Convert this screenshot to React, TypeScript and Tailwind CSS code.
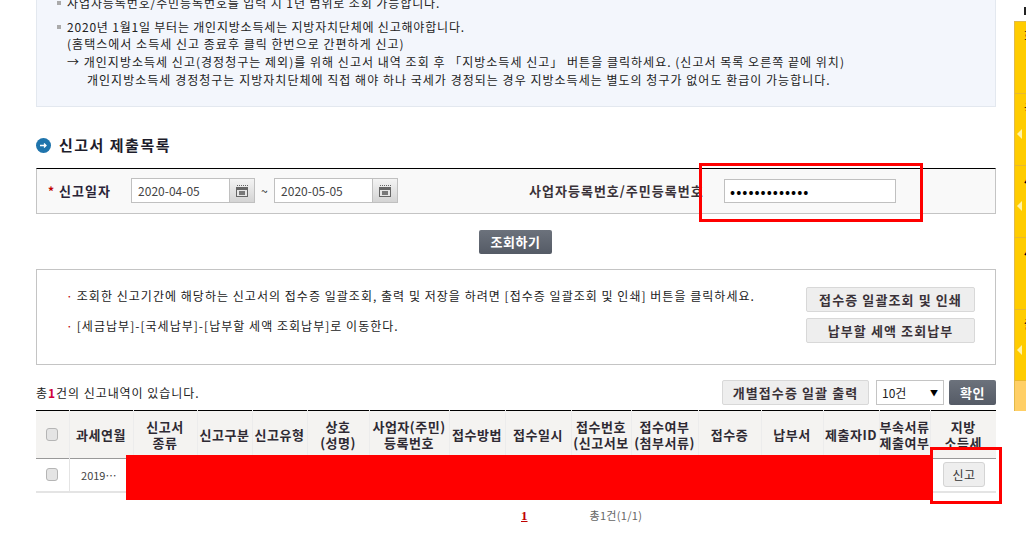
import React from "react";

const KR = "[font-family:'Noto_Sans_CJK_KR','Liberation_Sans',sans-serif]";

const columns = [
  { w: "w-[33px]", label: [""] },
  { w: "w-[64px]", label: ["과세연월"] },
  { w: "w-[64px]", label: ["신고서", "종류"] },
  { w: "w-[55px]", label: ["신고구분"] },
  { w: "w-[55px]", label: ["신고유형"] },
  { w: "w-[62px]", label: ["상호", "(성명)"] },
  { w: "w-[80px]", label: ["사업자(주민)", "등록번호"] },
  { w: "w-[56px]", label: ["접수방법"] },
  { w: "w-[66px]", label: ["접수일시"] },
  { w: "w-[60px]", label: ["접수번호", "(신고서보"] },
  { w: "w-[67px]", label: ["접수여부", "(첨부서류)"] },
  { w: "w-[63px]", label: ["접수증"] },
  { w: "w-[62px]", label: ["납부서"] },
  { w: "w-[56px]", label: ["제출자ID"] },
  { w: "w-[51px]", label: ["부속서류", "제출여부"] },
  { w: "w-[66px]", label: ["지방", "소득세"] },
];

const sideItems = [
  { h: "h-[72px]", text: "회", arrow: false, bold: false },
  { h: "h-[72px]", text: "국", arrow: true, bold: false },
  { h: "h-[72px]", text: "세", arrow: true, bold: true },
  { h: "h-[72px]", text: "세", arrow: false, bold: true },
  { h: "h-[71px]", text: "출", arrow: true, bold: false },
];

function Check() {
  return <span className="block mx-auto w-[12px] h-[13px] rounded-[3px] border border-[#b5b5b5] bg-[#e4e4e4]" />;
}

function CalendarButton() {
  return (
    <button className="flex items-center justify-center w-[25px] h-[25px] border border-l-0 border-[#c0c0c0] bg-gradient-to-b from-[#f4f4f4] to-[#d4d4d4]">
      <svg width="12" height="12" viewBox="0 0 12 12">
        <path d="M1 0.5h1M3 0.5h1M5 0.5h1M7 0.5h1M9 0.5h1M11 0.5h1" stroke="#666" strokeWidth="1" />
        <rect x="0.5" y="2.5" width="11" height="9" fill="#e6e6e6" stroke="#666" />
        <rect x="1" y="3" width="10" height="2" fill="#666" />
        <path d="M3 7h6M3 9h6M4 6v4M6 6v4M8 6v4" stroke="#555" strokeWidth="1" />
      </svg>
    </button>
  );
}

function DateField({ value }: { value: string }) {
  return (
    <div className="flex">
      <input
        readOnly
        value={value}
        className="w-[99px] h-[25px] border border-[#c0c0c0] bg-white pl-[6px] text-[12px] text-[#444] outline-none"
      />
      <CalendarButton />
    </div>
  );
}

function GrayButton({ label, className }: { label: string; className: string }) {
  return (
    <button className={`${className} rounded-[2px] border border-[#d8d8d8] bg-[#eeeeee] text-[13px] font-bold tracking-[1.1px] text-[#3a3238]`}>
      {label}
    </button>
  );
}

export default function App() {
  return (
    <div className={`relative flex h-[539px] w-[1026px] overflow-hidden bg-white text-[12px] text-[#222] ${KR}`}>
      <main className="ml-[36px] w-[960px] shrink-0">
        <div className="-mt-[7px] h-[114px] border border-t-0 border-[#e3e8ef] bg-[#f3f6fc] pl-[20px] pt-[1px] leading-[18px] tracking-[1.02px]">
          <p className="flex items-center gap-[6px] tracking-[0.9px]">
            <span className="h-[4px] w-[4px] bg-[#aaa]" />
            <span>사업자등록번호/주민등록번호를 입력 시 1년 범위로 조회 가능합니다.</span>
          </p>
          <p className="mt-[6px] flex h-[17px] items-center gap-[6px] tracking-[0.8px]">
            <span className="h-[4px] w-[4px] bg-[#aaa]" />
            <span>2020년 1월1일 부터는 개인지방소득세는 지방자치단체에 신고해야합니다.</span>
          </p>
          <p className="pl-[10px]">(홈택스에서 소득세 신고 종료후 클릭 한번으로 간편하게 신고)</p>
          <p className="pl-[10px]">→ 개인지방소득세 신고(경정청구는 제외)를 위해 신고서 내역 조회 후 「지방소득세 신고」 버튼을 클릭하세요. (신고서 목록 오른쪽 끝에 위치)</p>
          <p className="pl-[30px]">개인지방소득세 경정청구는 지방자치단체에 직접 해야 하나 국세가 경정되는 경우 지방소득세는 별도의 청구가 없어도 환급이 가능합니다.</p>
        </div>

        <h2 className="mt-[29px] flex h-[18px] items-center gap-[8px] text-[15px] font-bold tracking-[1.5px] text-[#1d1d2b]">
          <svg width="15" height="15" viewBox="0 0 15 15">
            <circle cx="7.5" cy="7.5" r="7.5" fill="#1f74ac" />
            <path d="M4 7.5h6M8 5.5l2 2-2 2" stroke="#fff" strokeWidth="1.3" fill="none" />
          </svg>
          신고서 제출목록
        </h2>

        <div className="mt-[14px] flex h-[46px] items-center border border-[#c4c4c4] border-t-black bg-[#f9f9f9] pb-[1px] pl-[11px]">
          <span className="text-[12px] font-bold text-[#c00000]">*</span>
          <span className="ml-[5px] w-[72px] text-[13px] font-bold tracking-[1px] text-[#2a2438]">신고일자</span>
          <DateField value="2020-04-05" />
          <span className="mx-[6px] w-[7px] text-[12px]">~</span>
          <DateField value="2020-05-05" />
          <span className="ml-[131px] w-[195px] text-[13px] font-bold tracking-[1px] text-[#3a3238]">사업자등록번호/주민등록번호</span>
          <input
            readOnly
            value="•••••••••••••"
            className="h-[24px] w-[172px] border border-[#c0c0c0] bg-white pl-[5px] text-[15px] tracking-[1px] text-black outline-none"
          />
        </div>

        <div className="mt-[16px] flex justify-center">
          <button className="ml-[-1px] h-[24px] w-[73px] rounded-[2px] bg-gradient-to-b from-[#6c727c] to-[#555b66] text-[13px] font-bold tracking-[0.6px] text-white">
            조회하기
          </button>
        </div>

        <div className="mt-[15px] flex h-[96px] border border-[#c4c4c4] pl-[29px]">
          <div className="flex-1 pt-[17px] tracking-[1.03px]">
            <p className="h-[30px] leading-[18px]"><span className="mr-[3px] text-[#c00000]">·</span>조회한 신고기간에 해당하는 신고서의 접수증 일괄조회, 출력 및 저장을 하려면 [접수증 일괄조회 및 인쇄] 버튼을 클릭하세요.</p>
            <p className="leading-[18px]"><span className="mr-[3px] text-[#c00000]">·</span>[세금납부]-[국세납부]-[납부할 세액 조회납부]로 이동한다.</p>
          </div>
          <div className="mr-[20px] flex flex-col gap-[6px] pt-[17px]">
            <GrayButton label="접수증 일괄조회 및 인쇄" className="h-[25px] w-[169px]" />
            <GrayButton label="납부할 세액 조회납부" className="h-[25px] w-[169px]" />
          </div>
        </div>

        <div className="mt-[15px] flex h-[25px] items-center">
          <p className="flex-1 tracking-[0.95px]">총<b className="text-[#d0003c]">1</b>건의 신고내역이 있습니다.</p>
          <GrayButton label="개별접수증 일괄 출력" className="h-[25px] w-[147px]" />
          <div className="ml-[7px] flex h-[25px] w-[68px] items-center justify-between border border-[#c4c4c4] bg-white pl-[5px] pr-[5px] text-[12px]">
            10건
            <span className="text-[8px] text-black">▼</span>
          </div>
          <button className="ml-[5px] h-[25px] w-[47px] rounded-[2px] bg-gradient-to-b from-[#6c727c] to-[#555b66] text-[13px] font-bold tracking-[0.6px] text-white">
            확인
          </button>
        </div>

        <div className="relative mt-[5px]">
          <table className="w-[960px] table-fixed border-collapse">
            <colgroup>
              {columns.map((c, i) => (
                <col key={i} className={c.w} />
              ))}
            </colgroup>
            <thead>
              <tr className="h-[48px] border-t border-b border-t-black border-b-[#999] bg-[#f4f3f1]">
                {columns.map((c, i) => (
                  <th key={i} className="border-r border-[#ececec] p-0 text-center text-[13px] font-bold leading-[16px] tracking-[0.5px] text-[#2e2a33] last:border-r-0">
                    {i === 0 ? <Check /> : c.label.map((l) => <div key={l} className="whitespace-nowrap">{l}</div>)}
                  </th>
                ))}
              </tr>
            </thead>
            <tbody>
              <tr className="h-[33px] border-b-2 border-[#e4e4e4]">
                <td className="border-r border-[#e4e4e4] p-0"><Check /></td>
                <td className="p-0 pr-[5px] text-center text-[11px] text-[#444]">2019…</td>
                <td colSpan={13} />
                <td className="p-0 pl-[2px] text-center">
                  <button className="h-[25px] w-[42px] rounded-[3px] border border-[#d4d4d4] bg-[#eeeeee] text-[12px] tracking-[0.5px] text-[#333]">신고</button>
                </td>
              </tr>
            </tbody>
          </table>
          <div className="absolute left-[90px] top-[45px] h-[45px] w-[804px] bg-[#ff0000]" />
        </div>

        <div className="mt-[14px] flex h-[18px] items-center text-[12px]">
          <a className="ml-[485px] font-['Liberation_Serif',serif] text-[13px] font-bold text-[#c00000] underline">1</a>
          <span className="ml-[62px] text-[11px] tracking-[0.3px] text-[#666]">총1건(1/1)</span>
        </div>
      </main>

      <aside className="ml-[18px] mt-[21px] h-[390px] w-[12px] overflow-hidden border-l border-t border-[#e0b94a] border-b-[#c8cc70]">
        {sideItems.map((s, i) => (
          <div key={i} className={`${s.h} border-b border-[#e8b830] bg-[#ffcc00] pl-[9px] pt-[7px] ${s.bold ? "font-bold" : ""}`}>
            <div className="text-[12px] leading-[14px] text-black">{s.text}</div>
            {s.arrow && (
              <svg className="mt-[14px] -ml-[7px]" width="5" height="10" viewBox="0 0 5 10">
                <path d="M0 5L5 0v10z" fill="#fff3a8" />
              </svg>
            )}
          </div>
        ))}
        <div className="h-[30px] bg-[#ffcf66]" />
      </aside>

      <div className="absolute left-[699px] top-[163px] h-[59px] w-[224px] border-[3px] border-[#ff0000]" />
      <div className="absolute left-[930px] top-[447px] h-[57px] w-[72px] border-[3px] border-[#ff0000]" />
      <span className="absolute left-[1024px] top-[7px] h-[8px] w-[2px] bg-[#222]" />
    </div>
  );
}
